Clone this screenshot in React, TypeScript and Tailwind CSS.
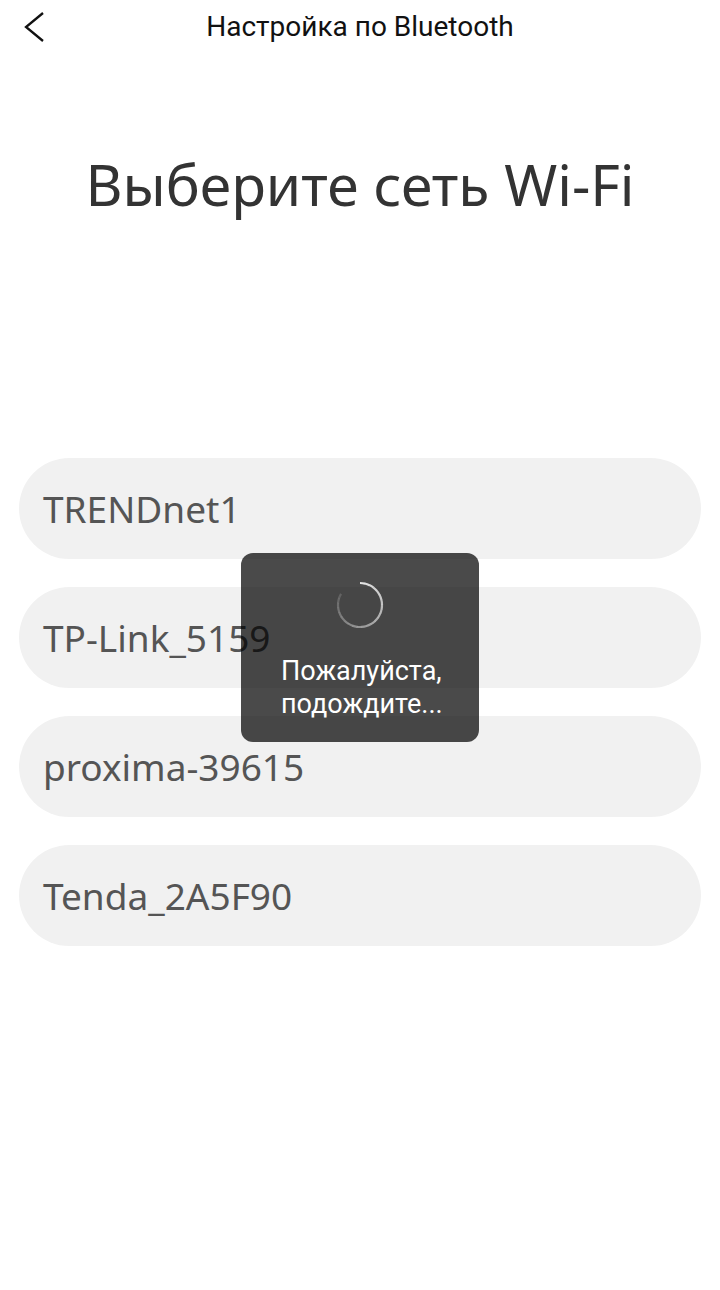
const NETWORKS = ["TRENDnet1", "TP-Link_5159", "proxima-39615", "Tenda_2A5F90"];

// spinner arc fades from bright (12 o'clock) clockwise round to dim (~10 o'clock)
function Spinner() {
  const r = 22;
  const c = 24;
  const segs = 24;
  const sweep = 300;
  const items = [];
  for (let i = 0; i < segs; i++) {
    const a0 = ((i * sweep) / segs - 90) * (Math.PI / 180);
    const a1 = (((i + 1) * sweep) / segs - 90 + 0.5) * (Math.PI / 180);
    const d = `M${c + r * Math.cos(a0)} ${c + r * Math.sin(a0)} A${r} ${r} 0 0 1 ${c + r * Math.cos(a1)} ${c + r * Math.sin(a1)}`;
    items.push(
      <path key={i} d={d} fill="none" stroke="#ffffff" strokeOpacity={0.85 - (i / segs) * 0.72} strokeWidth="2.2" />
    );
  }
  return (
    <svg width="48" height="48" viewBox="0 0 48 48">
      {items}
    </svg>
  );
}

export default function App() {
  return (
    <div className="relative h-[1290px] w-[720px] overflow-hidden bg-white">
      <div className="relative flex h-[54px] items-center justify-center">
        <button className="absolute left-[20px] top-[8px]" aria-label="back">
          <svg width="30" height="40" viewBox="0 0 30 40">
            <polyline points="23,5 6,19 23,33" fill="none" stroke="#111" strokeWidth="2.3" />
          </svg>
        </button>
        <span className="font-['Roboto',sans-serif] text-[28px] text-[#111]">
          Настройка по Bluetooth
        </span>
      </div>

      <h1 className="mt-[90px] text-center font-['Noto_Sans',sans-serif] text-[57px] leading-[80px] text-[#333]">
        Выберите сеть Wi-Fi
      </h1>

      <div className="mt-[234px] flex flex-col gap-[28px] px-[19px]">
        {NETWORKS.map((n) => (
          <div
            key={n}
            className="flex h-[101px] items-center rounded-full bg-[#f1f1f1] px-[24px] font-['Noto_Sans',sans-serif] text-[37px] text-[#555]"
          >
            {n}
          </div>
        ))}
      </div>

      {/* translucent loading toast over the list */}
      <div className="absolute left-[241px] top-[553px] flex h-[189px] w-[238px] flex-col items-center rounded-[12px] bg-black/[0.71] pt-[28px]">
        <Spinner />
        <div className="mt-[26px] self-start pl-[40px] font-['Roboto',sans-serif] text-[27px] leading-[33px] text-white">
          Пожалуйста,
          <br />
          подождите...
        </div>
      </div>
    </div>
  );
}
